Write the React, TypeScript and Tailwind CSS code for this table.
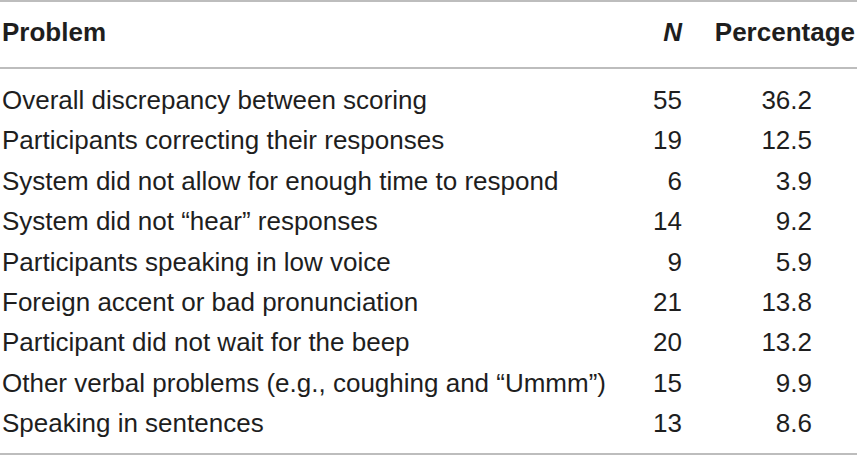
import React from "react";

const rows: [string, string, string][] = [
  ["Overall discrepancy between scoring", "55", "36.2"],
  ["Participants correcting their responses", "19", "12.5"],
  ["System did not allow for enough time to respond", "6", "3.9"],
  ["System did not \u201Chear\u201D responses", "14", "9.2"],
  ["Participants speaking in low voice", "9", "5.9"],
  ["Foreign accent or bad pronunciation", "21", "13.8"],
  ["Participant did not wait for the beep", "20", "13.2"],
  ["Other verbal problems (e.g., coughing and \u201CUmmm\u201D)", "15", "9.9"],
  ["Speaking in sentences", "13", "8.6"],
];

export default function App() {
  return (
    <div
      className="w-[857px] h-[456px] bg-white text-[#1e1e1e] text-[26px]"
      style={{ fontFamily: '"Liberation Sans", Arial, sans-serif' }}
    >
      <div className="border-t-2 border-b-2 border-[#bdbdbd]">
        <div className="grid grid-cols-[620px_62px_175px] pt-[10px] pb-[15px] border-b-2 border-[#bdbdbd] leading-[40px] font-bold">
          <div className="pl-[2px]">Problem</div>
          <div className="text-right italic">N</div>
          <div className="text-right pr-[2px]">Percentage</div>
        </div>
        <div className="pt-[11px] pb-[9px]">
          {rows.map(([p, n, pct]) => (
            <div
              key={p}
              className="grid grid-cols-[620px_62px_175px] h-[40.4px] leading-[40.4px]"
            >
              <div className="pl-[2px] whitespace-nowrap">{p}</div>
              <div className="text-right">{n}</div>
              <div className="text-right pr-[45px]">{pct}</div>
            </div>
          ))}
        </div>
      </div>
    </div>
  );
}
